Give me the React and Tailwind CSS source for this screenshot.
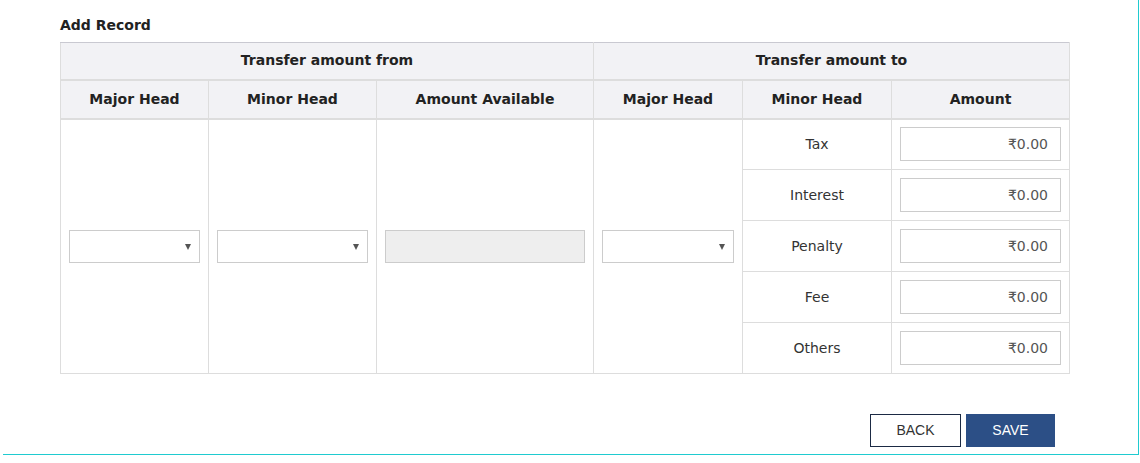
import React from "react";

const font = { fontFamily: '"DejaVu Sans", Verdana, sans-serif' };

function Select({ w }) {
  return (
    <div className={`relative h-[33px] ${w} border border-[#cccccc] bg-white`}>
      <span className="absolute right-[8px] top-[13px] w-0 h-0 border-l-[3px] border-r-[3px] border-t-[6px] border-l-transparent border-r-transparent border-t-[#555555]" />
    </div>
  );
}

function AmountInput() {
  return (
    <div className="h-[34px] w-[161px] border border-[#cccccc] bg-white flex items-center justify-end pr-[12px] text-[14px] text-[#555555]">
      ₹0.00
    </div>
  );
}

export default function App() {
  const minors = ["Tax", "Interest", "Penalty", "Fee", "Others"];
  return (
    <div className="bg-white w-[1140px] h-[463px] pl-[3px]" style={font}>
      <div className="w-[1136px] h-[455px] border-r border-b border-[#1fcbd0]">
        <div className="pl-[57px] pt-[17px]">
          <div className="text-[14px] font-bold text-[#222222] leading-[16px]">Add Record</div>
          <table className="mt-[9px] w-[1009px] border-collapse text-[14px] text-[#333333] table-fixed">
            <colgroup>
              <col className="w-[148px]" />
              <col className="w-[168px]" />
              <col className="w-[217px]" />
              <col className="w-[149px]" />
              <col className="w-[149px]" />
              <col className="w-[178px]" />
            </colgroup>
            <thead>
              <tr className="bg-[#f2f2f5] h-[37px]">
                <th colSpan={3} className="border border-[#dddddd] border-t-[#c9c9d1] border-b-2 font-bold text-[#222222] text-center">
                  Transfer amount from
                </th>
                <th colSpan={3} className="border border-[#dddddd] border-t-[#c9c9d1] border-b-2 font-bold text-[#222222] text-center">
                  Transfer amount to
                </th>
              </tr>
              <tr className="bg-[#f2f2f5] h-[39px]">
                {["Major Head", "Minor Head", "Amount Available", "Major Head", "Minor Head", "Amount"].map((h, i) => (
                  <th key={i} className="border border-[#dddddd] border-b-2 font-bold text-[#222222] text-center">
                    {h}
                  </th>
                ))}
              </tr>
            </thead>
            <tbody>
              {minors.map((m, i) => (
                <tr key={m} className="h-[51px]">
                  {i === 0 && (
                    <>
                      <td rowSpan={5} className="border border-[#dddddd] px-[8px] align-middle">
                        <Select w="w-[131px]" />
                      </td>
                      <td rowSpan={5} className="border border-[#dddddd] px-[8px] align-middle">
                        <Select w="w-[151px]" />
                      </td>
                      <td rowSpan={5} className="border border-[#dddddd] px-[8px] align-middle">
                        <div className="h-[33px] w-[200px] border border-[#cccccc] bg-[#eeeeee]" />
                      </td>
                      <td rowSpan={5} className="border border-[#dddddd] px-[8px] align-middle">
                        <Select w="w-[132px]" />
                      </td>
                    </>
                  )}
                  <td className="border border-[#dddddd] text-center">{m}</td>
                  <td className="border border-[#dddddd] px-[8px]">
                    <AmountInput />
                  </td>
                </tr>
              ))}
            </tbody>
          </table>
        </div>
        <div className="flex justify-end gap-[5px] pr-[83px] mt-[40px]" style={{ fontFamily: '"Liberation Sans", Arial, sans-serif' }}>
          <button className="w-[91px] h-[33px] border border-[#1b2a44] bg-white text-[14px] text-[#333333]">BACK</button>
          <button className="w-[89px] h-[33px] bg-[#2c4f86] text-[14px] text-white">SAVE</button>
        </div>
      </div>
    </div>
  );
}
